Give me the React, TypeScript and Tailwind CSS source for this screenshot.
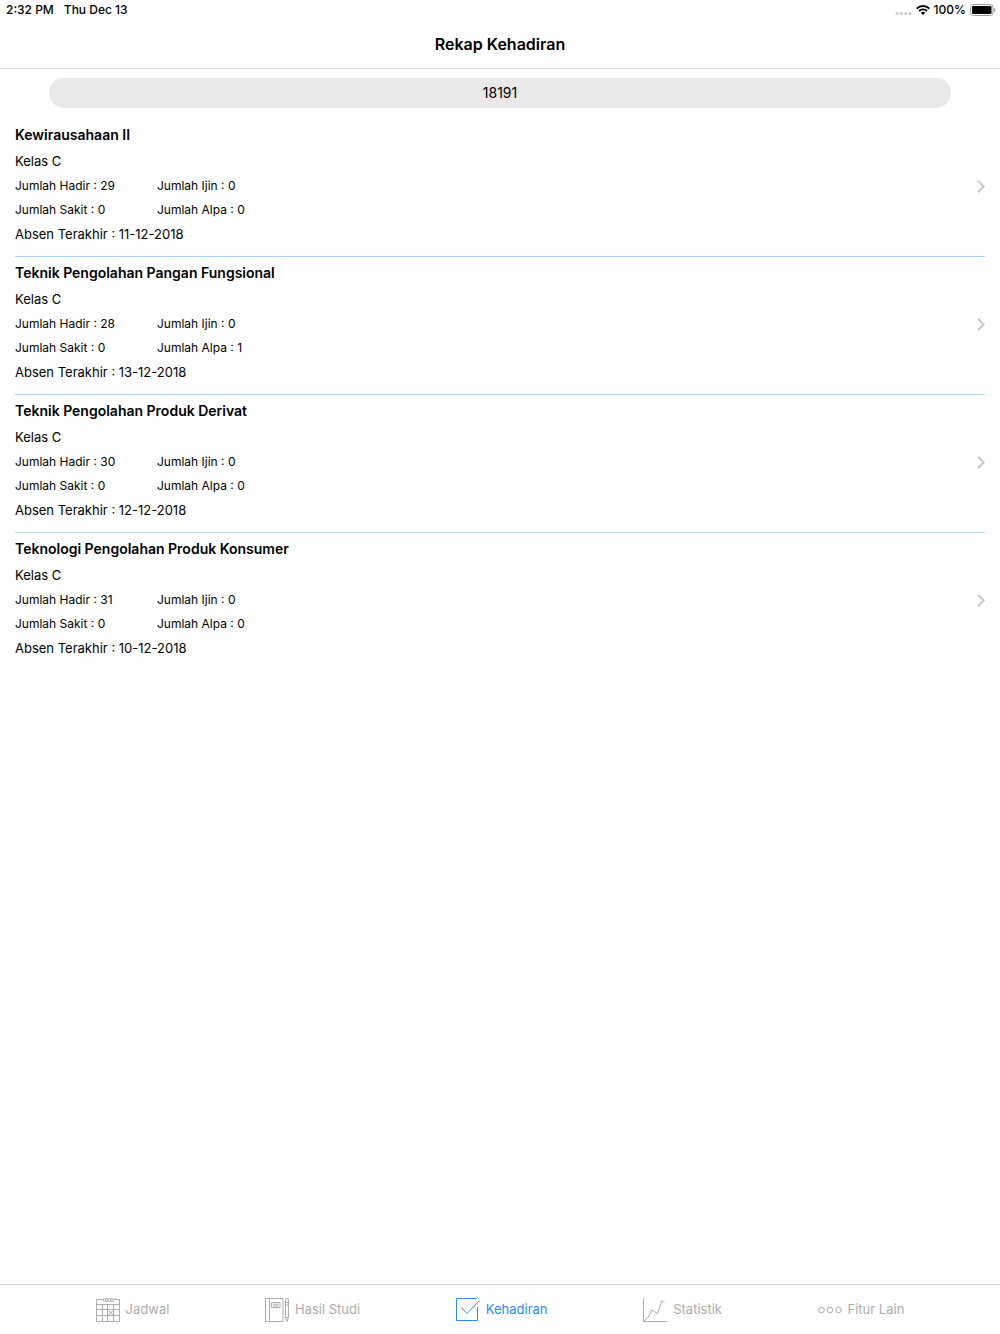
import { ReactNode, useState } from "react";

type Course = {
  name: string;
  kelas: string;
  hadir: number;
  ijin: number;
  sakit: number;
  alpa: number;
  last: string;
};

const courses: Course[] = [
  { name: "Kewirausahaan II", kelas: "C", hadir: 29, ijin: 0, sakit: 0, alpa: 0, last: "11-12-2018" },
  { name: "Teknik Pengolahan Pangan Fungsional", kelas: "C", hadir: 28, ijin: 0, sakit: 0, alpa: 1, last: "13-12-2018" },
  { name: "Teknik Pengolahan Produk Derivat", kelas: "C", hadir: 30, ijin: 0, sakit: 0, alpa: 0, last: "12-12-2018" },
  { name: "Teknologi Pengolahan Produk Konsumer", kelas: "C", hadir: 31, ijin: 0, sakit: 0, alpa: 0, last: "10-12-2018" },
];

function TabIcon({ children }: { children: ReactNode }) {
  return (
    <svg className="size-6" viewBox="0 0 24 24" fill="none" stroke="currentColor" strokeWidth="1" aria-hidden="true">
      {children}
    </svg>
  );
}

const tabs = [
  {
    id: "jadwal",
    label: "Jadwal",
    icon: (
      <TabIcon>
        <path d="M7 1.5H.5v22h23v-22H17M.5 6.5h23M.5 11.500h23M.5 17.5h23M6.5 6.5v17M11.500 6.5v17M17.5 6.5v17" />
        <path d="M12.500 12.500l4.500 4.500M17 12.500l-4.500 4.500" />
        <ellipse cx="8.500" cy="2" rx="1.200" ry="1.700" />
        <ellipse cx="11" cy="2" rx="1.200" ry="1.700" />
        <ellipse cx="13.500" cy="2" rx="1.200" ry="1.700" />
        <ellipse cx="16" cy="2" rx="1.200" ry="1.700" />
      </TabIcon>
    ),
  },
  {
    id: "hasil",
    label: "Hasil Studi",
    icon: (
      <TabIcon>
        <path d="M.5.500h17.500v23H.5zM4.500.500v23" />
        <path d="M6.500 4.500h8.500v5H6.500zM8 6.200h5.500M8 7.900h5.500" />
        <path d="M20.500 2q0-1.500 1.500-1.500t1.500 1.500v17.500L22 23.500l-1.500-4zM20.500 4.500h3M20.500 7h3M20.500 19.500h3" />
      </TabIcon>
    ),
  },
  {
    id: "kehadiran",
    label: "Kehadiran",
    icon: (
      <TabIcon>
        <path d="M20.500.500H.5v22h21V9" />
        <path d="M5.500 9.500l5.500 6L23.500 2.500" />
      </TabIcon>
    ),
  },
  {
    id: "statistik",
    label: "Statistik",
    icon: (
      <TabIcon>
        <path d="M.5 0v23.500H24" />
        <path d="M.5 23.500l4.500-4 3.800-7.500 5.700 3.500 4.500-13 2.500 2.500" />
      </TabIcon>
    ),
  },
  {
    id: "lain",
    label: "Fitur Lain",
    icon: (
      <TabIcon>
        <circle cx="3.500" cy="12" r="2.800" />
        <circle cx="12" cy="12" r="2.800" />
        <circle cx="20.500" cy="12" r="2.800" />
      </TabIcon>
    ),
  },
];

function StatusBar() {
  return (
    <div className="flex h-5 items-center justify-between pl-1.5 pr-1 text-xs font-medium">
      <div className="flex gap-2.5">
        <span>2:32 PM</span>
        <span>Thu Dec 13</span>
      </div>
      <div className="flex items-center gap-1">
        <svg className="mt-1.5 h-[3px] w-[17px] text-[#c8c8c8]" viewBox="0 0 17 3" fill="currentColor" aria-hidden="true">
          <circle cx="2" cy="1.500" r="1.500" />
          <circle cx="6.300" cy="1.500" r="1.500" />
          <circle cx="10.700" cy="1.500" r="1.500" />
          <circle cx="15" cy="1.500" r="1.500" />
        </svg>
        <svg className="h-2.5 w-3.5" viewBox="0 0 14 10" fill="none" stroke="currentColor" strokeWidth="1.900" aria-hidden="true">
          <path d="M.7 3.600a9 9 0 0 1 12.600 0M3 6a5.700 5.700 0 0 1 8 0" />
          <path d="M7 10L4.800 7.800a3.100 3.100 0 0 1 4.400 0z" fill="currentColor" stroke="none" />
        </svg>
        <span>100%</span>
        <svg className="h-3 w-[26px]" viewBox="0 0 26 12" aria-hidden="true">
          <rect x=".5" y=".5" width="22.500" height="11" rx="2.800" fill="none" stroke="#9b9b9b" />
          <rect x="2" y="2" width="19.500" height="8" rx="1.200" fill="#000" />
          <path d="M24 4q1.500.500 1.500 2T24 8z" fill="#9b9b9b" />
        </svg>
      </div>
    </div>
  );
}

function CourseRow({ course }: { course: Course }) {
  return (
    <li className="border-b border-[#a9d8fb] last:border-transparent">
      <a href="#detail" className="flex items-center justify-between pb-2.5 pt-1">
        <div className="text-[13px] leading-6">
          <h2 className="text-sm leading-6 font-semibold">{course.name}</h2>
          <p className="mt-0.5">Kelas {course.kelas}</p>
          <div className="mt-px grid grid-cols-[142px_auto] text-xs leading-6">
            <span>Jumlah Hadir : {course.hadir}</span>
            <span>Jumlah Ijin : {course.ijin}</span>
            <span>Jumlah Sakit : {course.sakit}</span>
            <span>Jumlah Alpa : {course.alpa}</span>
          </div>
          <p>Absen Terakhir : {course.last}</p>
        </div>
        <svg className="mt-1 h-[13px] w-2 text-[#c7c7cc]" viewBox="0 0 8 13" fill="none" stroke="currentColor" strokeWidth="2" aria-hidden="true">
          <path d="M1 .8l5.700 5.700L1 12.200" />
        </svg>
      </a>
    </li>
  );
}

export default function App() {
  const [active, setActive] = useState("kehadiran");
  const [semester, setSemester] = useState("18191");

  return (
    <div className="flex min-h-screen flex-col bg-[#fefefe] font-[Inter,'Liberation_Sans',sans-serif] text-black">
      <header className="border-b border-[#dcdcdc]">
        <StatusBar />
        <h1 className="flex h-12 items-center justify-center text-base font-semibold">Rekap Kehadiran</h1>
      </header>

      <main className="flex-1">
        <div className="px-[49px] pt-[9px]">
          <input
            className="block h-[30px] w-full rounded-full bg-[#e9e9e9] pb-0.5 text-center text-sm outline-none"
            aria-label="Semester"
            value={semester}
            onChange={(event) => setSemester(event.target.value)}
          />
        </div>
        <ul className="mt-[11px] px-[15px]">
          {courses.map((course) => (
            <CourseRow key={course.name} course={course} />
          ))}
        </ul>
      </main>

      <nav className="flex h-[50px] items-center justify-evenly border-t border-[#d5d5d5]">
        {tabs.map((tab) => (
          <button
            key={tab.id}
            type="button"
            onClick={() => setActive(tab.id)}
            className={`flex items-center gap-1.5 text-[13px] ${active === tab.id ? "text-[#2a8bf7]" : "text-[#acacac]"}`}
          >
            {tab.icon}
            {tab.label}
          </button>
        ))}
      </nav>
    </div>
  );
}
